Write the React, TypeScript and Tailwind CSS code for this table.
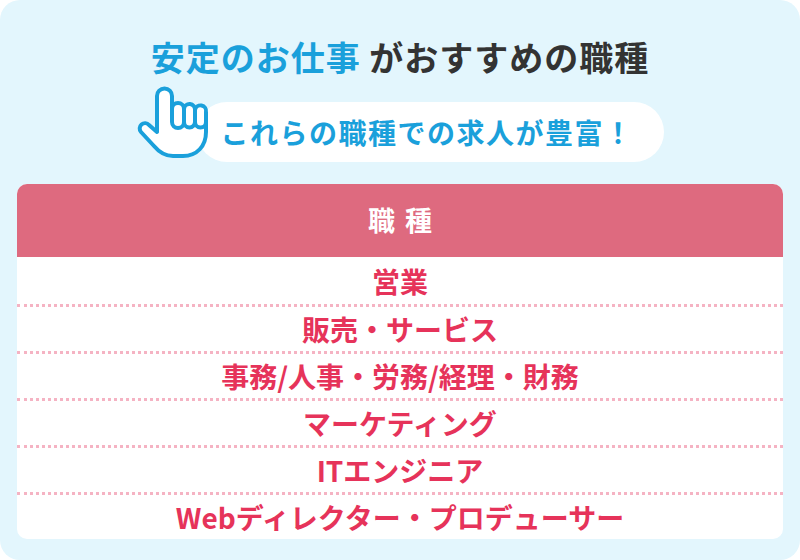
const rows = [
  "営業",
  "販売・サービス",
  "事務/人事・労務/経理・財務",
  "マーケティング",
  "ITエンジニア",
  "Webディレクター・プロデューサー",
];

function PointingHand() {
  return (
    <svg width="72" height="74" viewBox="0 0 72 74" className="relative z-10 -mr-[12px] mb-[2px] shrink-0">
      <path
        d="M20 46 L20 10 A7.5 7.5 0 0 1 35 10 L35 23 A6 6 0 0 1 47 23 A5.5 5.5 0 0 1 58 24 A5.5 5.5 0 0 1 69 26 L69 46 C69 60 60 70 46 70 L36 70 C28 70 22 66 17 60 L4 46 A5 5 0 0 1 12 39 L20 46 Z"
        fill="#ffffff"
        stroke="#1aa0db"
        strokeWidth="4"
        strokeLinejoin="round"
      />
      <path
        d="M35 23 L35 36 A6 6 0 0 0 47 36 L47 23 M47 36 A5.5 5.5 0 0 0 58 36 L58 24 M58 36 A5.5 5.5 0 0 0 69 36"
        fill="none"
        stroke="#1aa0db"
        strokeWidth="4"
        strokeLinecap="round"
      />
    </svg>
  );
}

export default function App() {
  return (
    <div
      className="flex h-[560px] w-[800px] flex-col items-center rounded-[20px] bg-[#e3f6fd] font-bold"
      style={{ fontFamily: '"Noto Sans CJK JP", "Noto Sans", sans-serif' }}
    >
      <h1 className="mt-[35px] text-[34px] leading-[44px] tracking-[1px]">
        <span className="text-[#1aa0db]">安定のお仕事</span>
        <span className="text-[#333333]"> がおすすめの職種</span>
      </h1>

      <div className="mt-[7px] flex items-end">
        <PointingHand />
        <div className="flex h-[60px] w-[467px] items-center rounded-[30px] bg-white pl-[24px] text-[28px] tracking-[1.5px] text-[#1aa0db]">
          これらの職種での求人が豊富！
        </div>
      </div>

      <div className="mt-[22px] w-[766px] overflow-hidden rounded-[10px] bg-white">
        <div className="flex h-[73px] items-center justify-center bg-[#de6a7f] pl-[10px] text-[27px] tracking-[10px] text-white">
          職種
        </div>
        {rows.map((name, i) => (
          <div
            key={name}
            className={
              i === 0
                ? "flex h-[47px] items-center justify-center text-[28px] text-[#e6335a]"
                : "flex h-[47px] items-center justify-center border-t-[3px] border-dotted border-[#f5b3c3] text-[28px] text-[#e6335a]"
            }
          >
            {name}
          </div>
        ))}
      </div>
    </div>
  );
}
